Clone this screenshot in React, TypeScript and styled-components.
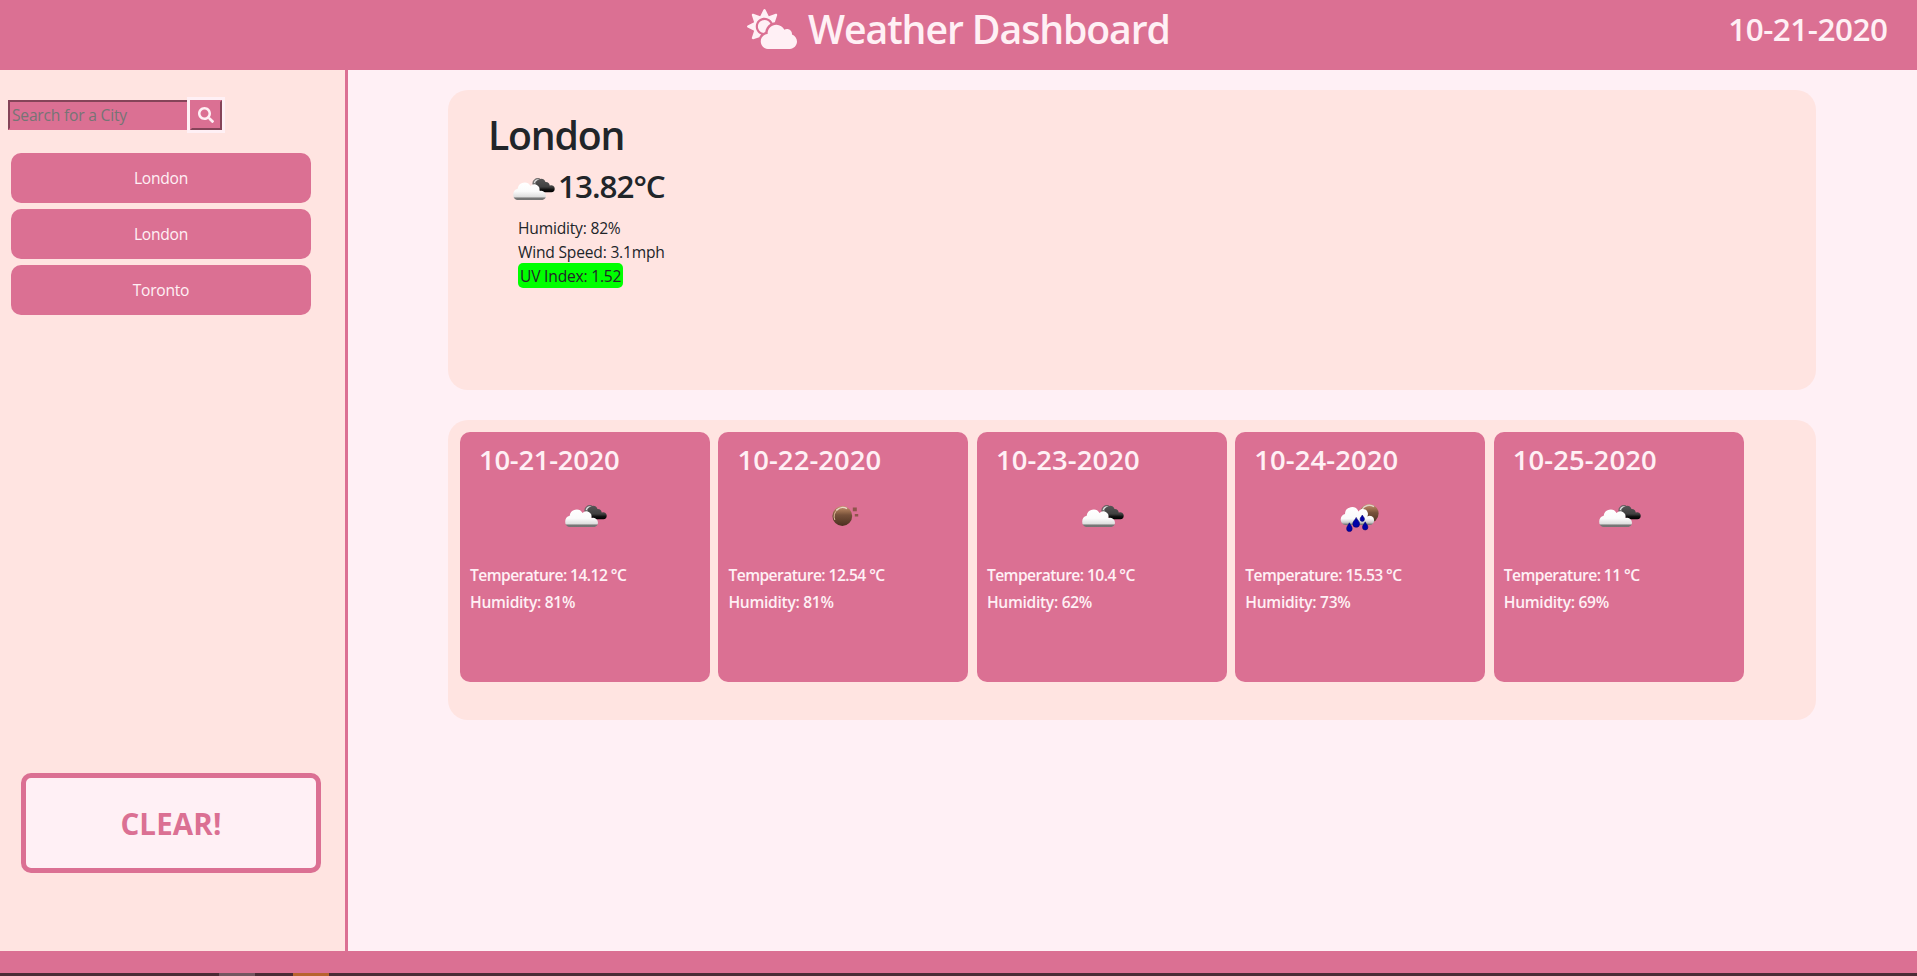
import React from "react";
import styled, { createGlobalStyle } from "styled-components";
import { FaCloudSun, FaSearch } from "react-icons/fa";

const rose = "#db7093";
const mist = "#ffe4e1";
const blush = "#fff0f5";
const ink = "#212529";

const GlobalStyle = createGlobalStyle`
  *, *::before, *::after { box-sizing: border-box; }
  body {
    margin: 0;
    overflow: hidden;
    background: ${blush};
    color: ${ink};
    font-family: "Open Sans", "Noto Sans", sans-serif;
    font-size: 16px;
    line-height: 24px;
  }
  h1, h2, h3, p { margin: 0; white-space: nowrap; }
`;

const Page = styled.div`
  display: flex;
  flex-direction: column;
  height: 976px;
`;

const Header = styled.header`
  display: grid;
  grid-template-columns: 1fr auto 1fr;
  height: 70px;
  flex: none;
  background: ${rose};
  color: ${blush};
`;

const Title = styled.h1`
  grid-column: 2;
  display: flex;
  gap: 11px;
  height: 58px;
  padding-top: 4px;
  font-size: 39.2px;
  font-weight: 600;
  line-height: 50px;
  letter-spacing: -1.08px;
  svg { display: block; margin-top: 5px; width: 50px; height: 40px; }
`;

const Today = styled.h2`
  justify-self: end;
  padding: 9px 29.5px 0 0;
  font-size: 31.4px;
  font-weight: 600;
  line-height: 40px;
  letter-spacing: -0.45px;
`;

const Body = styled.div`
  display: flex;
  height: 881px;
  flex: none;
`;

const Sidebar = styled.aside`
  display: flex;
  flex-direction: column;
  flex: none;
  width: 348px;
  padding: 30px 0 78px;
  background: ${mist};
  border-right: 3px solid ${rose};
`;

const SearchBar = styled.form`
  display: flex;
  gap: 3px;
  margin-left: 8px;
`;

const SearchInput = styled.input`
  width: 179px;
  height: 30px;
  padding: 1px 2px;
  border: 2px solid;
  border-color: #854459 ${rose} ${rose} #854459;
  border-right: 0;
  border-radius: 0;
  background: ${rose};
  font-family: inherit;
  font-size: 15.6px;
  letter-spacing: -0.2px;
  &::placeholder { color: #757575; opacity: 1; }
`;

const SearchButton = styled.button`
  display: flex;
  align-items: center;
  justify-content: center;
  width: 32px;
  height: 30px;
  padding: 0;
  border: 2px solid;
  border-color: ${rose} #854459 #854459 ${rose};
  outline: 3px solid ${blush};
  background: ${rose};
  color: ${blush};
`;

const History = styled.nav`
  display: flex;
  flex-direction: column;
  gap: 6px;
  margin: 23px 0 0 11px;
`;

const CityButton = styled.button`
  width: 300px;
  height: 50px;
  padding: 0 0 1px;
  border: 0;
  border-radius: 10px;
  background: ${rose};
  color: ${blush};
  font-family: inherit;
  font-size: 15.6px;
  letter-spacing: -0.25px;
`;

const ClearButton = styled.button`
  width: 300px;
  height: 100px;
  margin: auto 0 0 21px;
  padding: 0;
  border: 5px solid ${rose};
  border-radius: 10px;
  background: ${blush};
  color: ${rose};
  font-family: inherit;
  font-size: 29.5px;
  font-weight: 700;
  letter-spacing: 0.15px;
`;

const Main = styled.main`
  display: flex;
  flex-direction: column;
  gap: 30px;
  padding: 20px 0 0 100px;
`;

const Panel = styled.section`
  width: 1368px;
  height: 300px;
  border-radius: 20px;
  background: ${mist};
`;

const Current = styled(Panel)`
  padding: 20px 0 0 40px;
`;

const City = styled.h1`
  height: 54px;
  font-size: 39.2px;
  font-weight: 600;
  line-height: 50px;
  letter-spacing: -1.2px;
`;

const Reading = styled.h2`
  display: flex;
  height: 50px;
  margin-left: 20px;
  font-size: 31.4px;
  font-weight: 600;
  line-height: 43px;
  letter-spacing: -1px;
`;

const Details = styled.div`
  display: flex;
  flex-direction: column;
  align-items: flex-start;
  margin: 2px 0 0 30px;
  font-size: 15.6px;
  letter-spacing: -0.2px;
`;

const UvBadge = styled.p`
  height: 25px;
  margin-top: -1px;
  padding: 1px 2px 0;
  border-radius: 5px;
  background: #00ff00;
`;

const Forecast = styled(Panel)`
  display: flex;
  gap: 8.45px;
  padding: 12px;
`;

const DayCard = styled.article`
  flex: none;
  width: 250px;
  height: 250px;
  padding: 10px;
  border-radius: 10px;
  background: ${rose};
  color: ${blush};
`;

const DayDate = styled.h3<{ $tracking: number }>`
  height: 49px;
  padding-left: 9px;
  font-size: 27.4px;
  font-weight: 600;
  line-height: 35px;
  letter-spacing: ${(p) => p.$tracking}px;
`;

const DayIcon = styled.div`
  display: flex;
  justify-content: center;
  height: 72px;
`;

const DayStat = styled.p<{ $tracking: number }>`
  height: 27px;
  font-size: 15.6px;
  font-weight: 600;
  line-height: 24px;
  letter-spacing: ${(p) => p.$tracking}px;
`;

const Footer = styled.footer`
  height: 22px;
  flex: none;
  background: ${rose};
`;

const Taskbar = styled.div`
  display: flex;
  height: 3px;
  flex: none;
  padding-left: 219px;
  gap: 38px;
  background: #4b2a35;
`;

const TaskbarItem = styled.span<{ $color: string }>`
  width: 36px;
  background: ${(p) => p.$color};
`;

type Sky = "clouds" | "clear" | "rain";

const Gradients = ({ id }: { id: string }) => (
  <defs>
    <linearGradient id={`${id}-white`} x1="0" y1="0" x2="0" y2="1">
      <stop offset="0" stopColor="#fff" />
      <stop offset="0.5" stopColor="#fbfbfb" />
      <stop offset="0.84" stopColor="#dcdcdc" />
      <stop offset="0.87" stopColor="#777" />
      <stop offset="1" stopColor="#747474" />
    </linearGradient>
    <linearGradient id={`${id}-dark`} x1="0" y1="0" x2="0" y2="1">
      <stop offset="0" stopColor="#555" />
      <stop offset="0.6" stopColor="#404040" />
      <stop offset="0.8" stopColor="#111" />
      <stop offset="1" stopColor="#000" />
    </linearGradient>
    <linearGradient id={`${id}-moon`} x1="0" y1="0" x2="0" y2="1">
      <stop offset="0" stopColor="#c89370" />
      <stop offset="0.3" stopColor="#93684a" />
      <stop offset="0.45" stopColor="#76513a" />
      <stop offset="1" stopColor="#4c3020" />
    </linearGradient>
    <linearGradient id={`${id}-rain`} x1="0" y1="0" x2="0" y2="1">
      <stop offset="0" stopColor="#fff" />
      <stop offset="0.65" stopColor="#fafafa" />
      <stop offset="0.85" stopColor="#ccc" />
      <stop offset="1" stopColor="#686868" />
    </linearGradient>
  </defs>
);

const drop = (x: number, top: number, bottom: number, r: number) =>
  `M${x} ${top}C${x + r * 0.5} ${top + r} ${x + r} ${bottom - r * 1.8} ${x + r} ${bottom - r}` +
  `A${r} ${r} 0 0 1 ${x - r} ${bottom - r}C${x - r} ${bottom - r * 1.8} ${x - r * 0.5} ${top + r} ${x} ${top}Z`;

const SkyIcon = ({ sky, id }: { sky: Sky; id: string }) => (
  <svg width="50" height="50" viewBox="0 0 50 50" aria-hidden="true">
    <Gradients id={id} />
    {sky === "clouds" && (
      <>
        <circle cx="29.8" cy="19.4" r="4.9" fill="#777" stroke="#555" strokeWidth="0.8" />
        <path d="M26.3 19a3.8 3.8 0 0 1 5.8-2.6" fill="none" stroke="#ddd" strokeWidth="1.2" />
        <path
          d="M28 21a5 5 0 0 1 9.5-3 4 4 0 0 1 4.2 3.6 3.4 3.4 0 0 1 5 3.2 3.4 3.4 0 0 1-3.5 3.4H34L28 24Z"
          fill={`url(#${id}-dark)`}
        />
        <path
          d="M9 36a5.5 5.5 0 0 1-3.8-5.5 6 6 0 0 1 4.5-5.7A6.9 6.9 0 0 1 22.5 22a5.2 5.2 0 0 1 8.8 5 5 5 0 0 1 6.7 4.8A4.6 4.6 0 0 1 34.6 36Z"
          fill={`url(#${id}-white)`}
        />
      </>
    )}
    {sky === "clear" && (
      <>
        <circle cx="24.3" cy="25" r="9.9" fill={`url(#${id}-moon)`} />
        <path d="M16.8 29a8.8 8.8 0 0 1 3-10.6" fill="none" stroke="#e0b99b" strokeWidth="1" />
        <path d="M18.5 19.2a8.5 8.5 0 0 1 10.5-1.5" fill="none" stroke="#e8d6c6" strokeWidth="1.4" />
        <path d="M34.8 16.5h4v3.8h-4ZM36.8 23h3.4v2.6h-3.4Z" fill="#80503f" opacity="0.85" />
      </>
    )}
    {sky === "rain" && (
      <>
        <circle cx="34.1" cy="22.6" r="9.5" fill={`url(#${id}-moon)`} />
        <path d="M27 18.5a8.4 8.4 0 0 1 12-2.8" fill="none" stroke="#e0d2c7" strokeWidth="1.4" />
        <path
          d="M10.5 34a5.3 5.3 0 0 1-4.8-5.5 6 6 0 0 1 4.3-5.5A7 7 0 0 1 23.5 20.5a5 5 0 0 1 8.8 5 4.4 4.4 0 0 1 6.8 3.9 4.5 4.5 0 0 1-4.6 4.6Z"
          fill={`url(#${id}-rain)`}
        />
        <path
          d={drop(14.4, 31.8, 40.6, 2.8) + drop(21.2, 26.4, 36.3, 3.4) + drop(27.3, 24, 30.4, 2.2) + drop(30.2, 30.8, 39, 2.7)}
          fill="#0000a8"
          stroke="#000060"
          strokeWidth="0.5"
        />
      </>
    )}
  </svg>
);

const history = ["London", "London", "Toronto"];

const days: { date: string; sky: Sky; temp: string; humidity: string }[] = [
  { date: "10-21-2020", sky: "clouds", temp: "14.12", humidity: "81%" },
  { date: "10-22-2020", sky: "clear", temp: "12.54", humidity: "81%" },
  { date: "10-23-2020", sky: "clouds", temp: "10.4", humidity: "62%" },
  { date: "10-24-2020", sky: "rain", temp: "15.53", humidity: "73%" },
  { date: "10-25-2020", sky: "clouds", temp: "11", humidity: "69%" },
];

const dateTracking = (date: string) => (date.includes("1-") ? -0.25 : 0.1);

export default function App() {
  return (
    <Page>
      <GlobalStyle />
      <Header>
        <Title>
          <FaCloudSun />
          Weather Dashboard
        </Title>
        <Today>10-21-2020</Today>
      </Header>
      <Body>
        <Sidebar>
          <SearchBar onSubmit={(e) => e.preventDefault()}>
            <SearchInput placeholder="Search for a City" />
            <SearchButton type="submit" aria-label="Search">
              <FaSearch size={16} />
            </SearchButton>
          </SearchBar>
          <History>
            {history.map((city, i) => (
              <CityButton key={i}>{city}</CityButton>
            ))}
          </History>
          <ClearButton>CLEAR!</ClearButton>
        </Sidebar>
        <Main>
          <Current>
            <City>London</City>
            <Reading>
              <SkyIcon sky="clouds" id="now" />
              13.82°C
            </Reading>
            <Details>
              <p>Humidity: 82%</p>
              <p>Wind Speed: 3.1mph</p>
              <UvBadge>UV Index: 1.52</UvBadge>
            </Details>
          </Current>
          <Forecast>
            {days.map((day) => (
              <DayCard key={day.date}>
                <DayDate $tracking={dateTracking(day.date)}>{day.date}</DayDate>
                <DayIcon>
                  <SkyIcon sky={day.sky} id={day.date} />
                </DayIcon>
                <DayStat $tracking={-0.55}>Temperature: {day.temp} °C</DayStat>
                <DayStat $tracking={-0.3}>Humidity: {day.humidity}</DayStat>
              </DayCard>
            ))}
          </Forecast>
        </Main>
      </Body>
      <Footer />
      <Taskbar>
        <TaskbarItem $color="#745560" />
        <TaskbarItem $color="#b8622f" />
      </Taskbar>
    </Page>
  );
}
